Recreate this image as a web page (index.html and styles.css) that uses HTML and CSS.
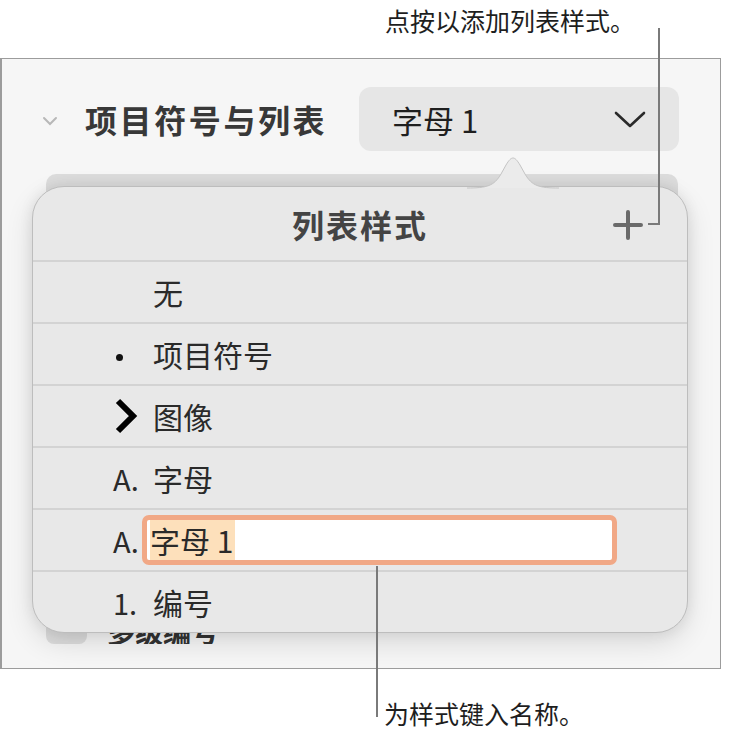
FILE: index.html
```html
<!DOCTYPE html>
<html lang="zh-CN">
<head>
    <meta charset="UTF-8">
    <title>列表样式</title>
    <link rel="stylesheet" href="styles.css">
</head>
<body>
    <div class="figure">
        <!-- top note, points at the + button -->
        <div class="note-top">点按以添加列表样式。</div>

        <div class="panel">
            <div class="section-head">
                <svg class="disclosure" width="16" height="10" viewBox="0 0 16 10">
                    <path d="M2 2 L8 8 L14 2" fill="none" stroke="#b8b8b8" stroke-width="2" stroke-linecap="round"/>
                </svg>
                <span class="section-title">项目符号与列表</span>
                <div class="select">
                    <span>字母 1</span>
                    <svg width="32" height="18" viewBox="0 0 32 18">
                        <path d="M2 2 L16 15 L30 2" fill="none" stroke="#2a2a2a" stroke-width="2.6" stroke-linecap="round" stroke-linejoin="round"/>
                    </svg>
                </div>
            </div>

            <div class="list-under">
                <div class="list-under-top"></div>
                <div class="list-under-row">
                    <span class="swatch"></span>
                    <span class="under-clip"><span class="under-label">多级编号</span></span>
                </div>
            </div>
        </div>

        <!-- popover with the list styles -->
        <svg class="pointer" width="92" height="34" viewBox="0 0 92 34">
            <path d="M0 33 C20 33 27 31 34 19 L39 10 C42 5 44 3 46 3 C48 3 50 5 53 10 L58 19 C65 31 72 33 92 33 Z" fill="#ebebeb"/>
            <path d="M0 33 C20 33 27 31 34 19 L39 10 C42 5 44 3 46 3 C48 3 50 5 53 10 L58 19 C65 31 72 33 92 33" fill="none" stroke="#c4c4c4" stroke-width="1"/>
        </svg>
        <div class="popover">
            <div class="popover-head">
                <span>列表样式</span>
                <svg class="add" width="32" height="32" viewBox="0 0 32 32">
                    <path d="M16 3 V29 M3 16 H29" stroke="#6a6a6a" stroke-width="4" stroke-linecap="round"/>
                </svg>
            </div>
            <div class="row"><span class="mark"></span><span class="label">无</span></div>
            <div class="row"><span class="mark"><i class="dot"></i></span><span class="label">项目符号</span></div>
            <div class="row">
                <span class="mark">
                    <svg width="26" height="38" viewBox="0 0 26 38">
                        <path d="M5 4 L20 19 L5 34" fill="none" stroke="#000" stroke-width="6" stroke-linejoin="miter"/>
                    </svg>
                </span>
                <span class="label">图像</span>
            </div>
            <div class="row"><span class="mark">A.</span><span class="label">字母</span></div>
            <div class="row">
                <span class="mark">A.</span>
                <div class="name-field"><span class="selected">字母 1</span></div>
            </div>
            <div class="row"><span class="mark">1.</span><span class="label">编号</span></div>
        </div>

        <div class="line-top"></div>
        <div class="tick-top"></div>
        <div class="line-bottom"></div>
        <div class="note-bottom">为样式键入名称。</div>
    </div>
</body>
</html>
```

FILE: styles.css
```css
/* list style popover, with notes */
body {
    margin: 0;
    background: #fff;
    font-family: "Noto Sans CJK SC", "Noto Sans", sans-serif;
    color: #2a2a2a;
}

.figure {
    position: relative;
    width: 729px;
    height: 729px;
    overflow: hidden;
}

.note-top {
    height: 58px;
    padding-left: 385px;
    font-size: 25px;
    line-height: 40px;
    color: #1e1e1e;
    box-sizing: border-box;
}

.panel {
    width: 721px;
    height: 611px;
    box-sizing: border-box;
    border: 1.5px solid #9c9c9c;
    border-left-width: 2px;
    background: #f6f6f6;
    padding-top: 28px;
}

.section-head {
    display: flex;
    align-items: center;
    height: 64px;
}

.disclosure {
    margin-left: 40px;
    margin-top: 4px;
}

.section-title {
    margin-left: 27px;
    font-size: 32px;
    font-weight: 700;
    color: #383838;
    letter-spacing: 2.6px;
}

.select {
    margin-left: auto;
    margin-right: 41px;
    width: 320px;
    height: 64px;
    border-radius: 12px;
    background: #e6e6e6;
    display: flex;
    align-items: center;
    justify-content: space-between;
    padding: 0 33px 0 33px;
    box-sizing: border-box;
    font-size: 31px;
    color: #1f1f1f;
}

.select svg {
    margin-top: 2px;
}

.list-under {
    margin: 23px 0 0 44px;
    width: 632px;
    height: 470px;
    display: flex;
    flex-direction: column;
    justify-content: space-between;
}

.list-under-top {
    height: 40px;
    border-radius: 10px 10px 0 0;
    background: #dcdcdc;
}

.list-under-row {
    display: flex;
    align-items: flex-end;
    height: 32px;
}

.swatch {
    width: 41px;
    height: 32px;
    border-radius: 8px;
    background: #dddddd;
}

/* only the lower half of this row shows below the popover */
.under-clip {
    margin-left: 20px;
    height: 14px;
    overflow: hidden;
    display: flex;
    align-items: flex-end;
}

.under-label {
    font-size: 28px;
    line-height: 28px;
    font-weight: 700;
    color: #333;
    margin-bottom: -1px;
}

.pointer {
    position: absolute;
    left: 467px;
    top: 155px;
    z-index: 3;
}

.popover {
    position: absolute;
    left: 32px;
    top: 186px;
    width: 656px;
    height: 447px;
    box-sizing: border-box;
    border: 1px solid #bdbdbd;
    border-radius: 32px;
    background: #e8e8e8;
    box-shadow: 0 10px 28px rgba(0, 0, 0, 0.12), 0 0 14px rgba(0, 0, 0, 0.08);
    z-index: 2;
    overflow: hidden;
}

.popover-head {
    height: 73px;
    display: flex;
    align-items: center;
    justify-content: center;
    position: relative;
    font-size: 32px;
    font-weight: 700;
    color: #444;
    letter-spacing: 2px;
}

.add {
    position: absolute;
    right: 43px;
    top: 22px;
}

.row {
    height: 60px;
    border-top: 2px solid #d3d3d3;
    display: flex;
    align-items: center;
    font-size: 30px;
    color: #2a2a2a;
}

.mark {
    width: 120px;
    padding-left: 80px;
    box-sizing: border-box;
    display: flex;
    align-items: center;
    font-size: 29px;
}

.dot {
    display: block;
    width: 7px;
    height: 7px;
    border-radius: 50%;
    background: #111;
    margin: 6px 0 0 3px;
}

.name-field {
    margin-left: -11px;
    width: 475px;
    height: 50px;
    box-sizing: border-box;
    border: 5px solid #f1a886;
    border-radius: 7px;
    background: #fff;
    display: flex;
    align-items: center;
    padding-left: 3px;
}

.selected {
    background: #fde0bb;
    line-height: 40px;
    padding-right: 2px;
}

.line-top {
    position: absolute;
    left: 658px;
    top: 28px;
    width: 2px;
    height: 197px;
    background: #7a7a7a;
    z-index: 4;
}

.tick-top {
    position: absolute;
    left: 648px;
    top: 223px;
    width: 12px;
    height: 2px;
    background: #7a7a7a;
    z-index: 4;
}

.line-bottom {
    position: absolute;
    left: 376px;
    top: 566px;
    width: 2px;
    height: 151px;
    background: #7a7a7a;
    z-index: 4;
}

.note-bottom {
    position: absolute;
    left: 384px;
    top: 700px;
    font-size: 25px;
    line-height: 26px;
    color: #1e1e1e;
}
```
